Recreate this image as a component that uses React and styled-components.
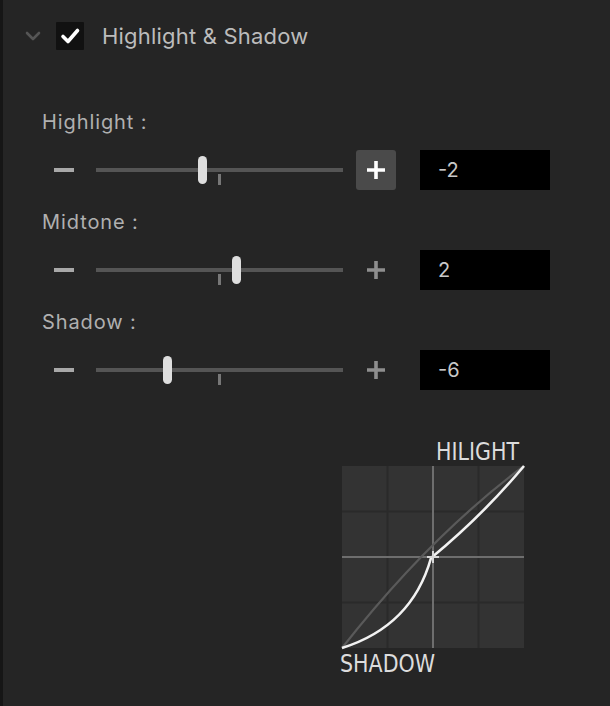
import React from 'react'
import styled, { createGlobalStyle } from 'styled-components'

const GlobalStyle = createGlobalStyle`
  html, body {
    margin: 0;
    padding: 0;
    background: #252525;
  }
  body {
    font-family: Inter, "Liberation Sans", sans-serif;
  }
`

const sliders = [
  { label: 'Highlight :', value: -2, active: true },
  { label: 'Midtone :', value: 2 },
  { label: 'Shadow :', value: -6 },
]

const Chevron = () => (
  <svg width="18" height="12" viewBox="0 0 18 12">
    <path d="M3 3 L9 9 L15 3" fill="none" stroke="#555" strokeWidth="2.6" strokeLinecap="round" strokeLinejoin="round" />
  </svg>
)

const Check = () => (
  <svg width="28" height="28" viewBox="0 0 28 28">
    <path d="M7 14.5 L12 19.5 L21.5 8.5" fill="none" stroke="#fff" strokeWidth="3.6" strokeLinecap="round" strokeLinejoin="round" />
  </svg>
)

const Plus = ({ color }) => (
  <svg width="22" height="22" viewBox="0 0 22 22">
    <path d="M11 2 V20 M2 11 H20" stroke={color} strokeWidth="3.6" strokeLinecap="butt" />
  </svg>
)

const Slider = ({ value }) => {
  const left = 123.5 + value * 8.6
  return (
    <Track>
      <Tick />
      <Thumb style={{ left: left - 4.5 }} />
    </Track>
  )
}

const SliderBlock = ({ label, value, active }) => (
  <Block>
    <Label>{label}</Label>
    <Row>
      <StepButton>
        <Minus />
      </StepButton>
      <Slider value={value} />
      <StepButton $active={active}>
        <Plus color={active ? '#fff' : '#8e8e8e'} />
      </StepButton>
      <ValueBox>{value}</ValueBox>
    </Row>
  </Block>
)

const Curve = () => (
  <svg width="190" height="250" viewBox="0 0 190 250">
    <text transform="translate(98 32) scale(1 1.2)" fontFamily="'DejaVu Sans', sans-serif" fontSize="20.6" fill="#dcdcdc">HILIGHT</text>
    <g transform="translate(4 38)">
      <rect x="0" y="0" width="182" height="182" fill="#333" />
      {[45.5, 136.5].map((p) => (
        <g key={p}>
          <rect x={p - 1} y="0" width="2" height="182" fill="#2a2a2a" />
          <rect x="0" y={p - 1} width="182" height="2" fill="#2a2a2a" />
        </g>
      ))}
      <rect x="90" y="0" width="2" height="182" fill="#6e6e6e" />
      <rect x="0" y="90" width="182" height="2" fill="#6e6e6e" />
      <path d="M0 182 Q88 70 182 0" fill="none" stroke="#5a5a5a" strokeWidth="2.2" />
      <path d="M0 182 Q70 160 89 92 Q140 50 182 0" fill="none" stroke="#f2f2f2" strokeWidth="2.6" />
      <path d="M91 85 V97 M85 91 H97" stroke="#d8d8d8" strokeWidth="2" />
    </g>
    <text transform="translate(2 244) scale(1 1.2)" fontFamily="'DejaVu Sans', sans-serif" fontSize="20.6" fill="#dcdcdc">SHADOW</text>
  </svg>
)

export default function App() {
  return (
    <>
      <GlobalStyle />
      <Panel>
        <Header>
          <ChevronBox>
            <Chevron />
          </ChevronBox>
          <CheckBox>
            <Check />
          </CheckBox>
          <Title>Highlight &amp; Shadow</Title>
        </Header>
        <Controls>
          {sliders.map((s) => (
            <SliderBlock key={s.label} {...s} />
          ))}
        </Controls>
        <GraphWrap>
          <Curve />
        </GraphWrap>
      </Panel>
    </>
  )
}

const Panel = styled.div`
  width: 610px;
  height: 706px;
  background: #252525;
  box-shadow: inset 3px 0 0 #161616;
  display: flex;
  flex-direction: column;
  overflow: hidden;
`

const Header = styled.div`
  display: flex;
  align-items: center;
  height: 28px;
  margin-top: 22px;
  padding-left: 24px;
`

const ChevronBox = styled.div`
  display: flex;
  width: 18px;
  height: 12px;
`

const CheckBox = styled.div`
  display: flex;
  width: 28px;
  height: 28px;
  margin-left: 14px;
  background: #111;
  border-radius: 1px;
`

const Title = styled.span`
  margin-left: 18px;
  font-size: 22px;
  letter-spacing: 0.2px;
  color: #bcbcbc;
  line-height: 28px;
`

const Controls = styled.div`
  display: flex;
  flex-direction: column;
  margin-top: 60px;
  gap: 20px;
`

const Block = styled.div`
  display: flex;
  flex-direction: column;
  gap: 16px;
`

const Label = styled.div`
  padding-left: 42px;
  height: 24px;
  line-height: 24px;
  font-size: 20px;
  letter-spacing: 0.9px;
  color: #b0b0b0;
`

const Row = styled.div`
  display: flex;
  align-items: center;
  height: 40px;
  padding-left: 44px;
`

const StepButton = styled.div`
  display: flex;
  align-items: center;
  justify-content: center;
  width: 40px;
  height: 40px;
  border-radius: 3px;
  background: ${(p) => (p.$active ? '#4a4a4a' : 'transparent')};
  margin-left: 13px;
  &:first-child {
    margin-left: 0;
  }
`

const Minus = styled.div`
  width: 20px;
  height: 4px;
  background: #a8a8a8;
`

const Track = styled.div`
  position: relative;
  width: 247px;
  height: 4px;
  margin-left: 12px;
  background: #555;
`

const Tick = styled.div`
  position: absolute;
  left: 122px;
  top: 6px;
  width: 3px;
  height: 11px;
  background: #777;
`

const Thumb = styled.div`
  position: absolute;
  top: -12px;
  width: 9px;
  height: 28px;
  border-radius: 5px;
  background: #dedede;
`

const ValueBox = styled.div`
  width: 130px;
  height: 40px;
  margin-left: 24px;
  background: #000;
  box-sizing: border-box;
  padding-left: 18px;
  display: flex;
  align-items: center;
  font-size: 20px;
  color: #c8c8c8;
`

const GraphWrap = styled.div`
  display: flex;
  margin-top: 38px;
  padding-left: 338px;
`
